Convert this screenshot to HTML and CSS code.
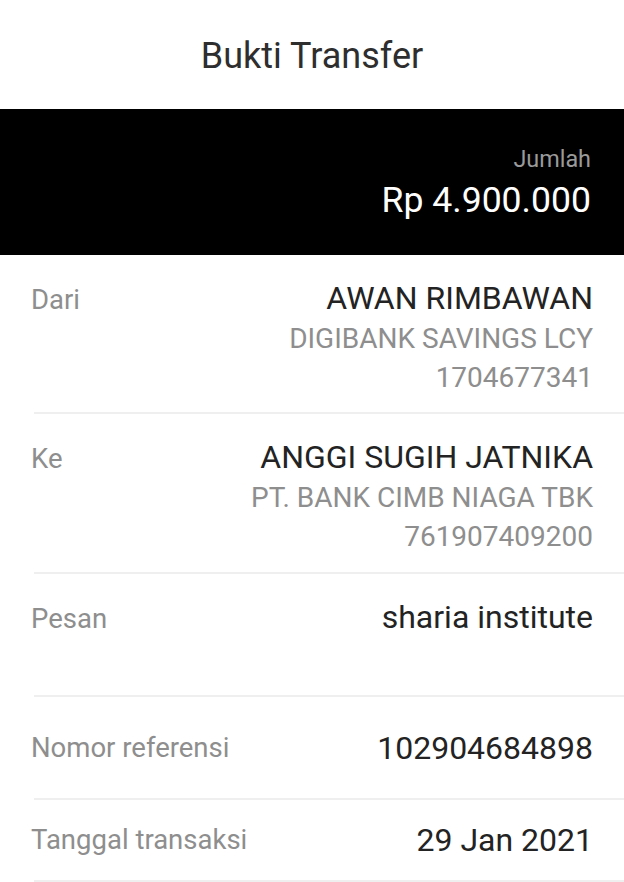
FILE: index.html
```html
<!DOCTYPE html>
<html>
<head>
<meta charset="utf-8">
<link rel="stylesheet" href="styles.css">
</head>
<body>
<div class="page">
  <header class="title-bar"><h1 class="title">Bukti Transfer</h1></header>
  <section class="amount-band">
    <div class="amount-label">Jumlah</div>
    <div class="amount-value">Rp 4.900.000</div>
  </section>
  <div class="rows">
    <div class="row row-top row-dari">
      <div class="label">Dari</div>
      <div class="value">
        <div class="main">AWAN RIMBAWAN</div>
        <div class="sub">DIGIBANK SAVINGS LCY</div>
        <div class="sub">1704677341</div>
      </div>
    </div>
    <div class="row row-top row-ke">
      <div class="label">Ke</div>
      <div class="value">
        <div class="main">ANGGI SUGIH JATNIKA</div>
        <div class="sub">PT. BANK CIMB NIAGA TBK</div>
        <div class="sub">761907409200</div>
      </div>
    </div>
    <div class="row row-top row-pesan">
      <div class="label">Pesan</div>
      <div class="value"><div class="main">sharia institute</div></div>
    </div>
    <div class="row row-center row-ref">
      <div class="label">Nomor referensi</div>
      <div class="value"><div class="main">102904684898</div></div>
    </div>
    <div class="row row-center row-date">
      <div class="label">Tanggal transaksi</div>
      <div class="value"><div class="main">29 Jan 2021</div></div>
    </div>
  </div>
</div>
</body>
</html>
```
FILE: styles.css
```css
* { box-sizing: border-box; margin: 0; padding: 0; }
html, body { background: #fff; }
body { font-family: Roboto, "Noto Sans", sans-serif; }
.page { width: 624px; }
.title-bar { height: 109px; display: flex; align-items: center; justify-content: center; padding-top: 3px; }
.title { font-weight: 400; font-size: 36px; line-height: 42px; color: #2e2e2e; }
.amount-band { background: #000; height: 146px; padding: 36px 33px 0 0; display: flex; flex-direction: column; align-items: flex-end; }
.amount-label { color: #9a9a9a; font-size: 23.4px; line-height: 28px; }
.amount-value { color: #fff; font-size: 35.6px; line-height: 44px; margin-top: 5px; }
.rows { padding-left: 34px; }
.row { display: flex; justify-content: space-between; border-bottom: 2px solid #efefef; padding-right: 31px; }
.label { color: #8e8e8e; font-size: 27.5px; line-height: 38px; margin-left: -3px; }
.value { text-align: right; }
.main { color: #232323; font-size: 32px; line-height: 38px; }
.sub { color: #8e8e8e; font-size: 28px; line-height: 39px; }
.main + .sub { margin-top: 2px; }
.row-top { align-items: baseline; padding-top: 24px; }
.row-dari { height: 159px; }
.row-ke { height: 160px; }
.row-pesan { height: 123px; }
.row-center { align-items: center; }
.row-ref { height: 103px; }
.row-date { height: 82px; }
```
